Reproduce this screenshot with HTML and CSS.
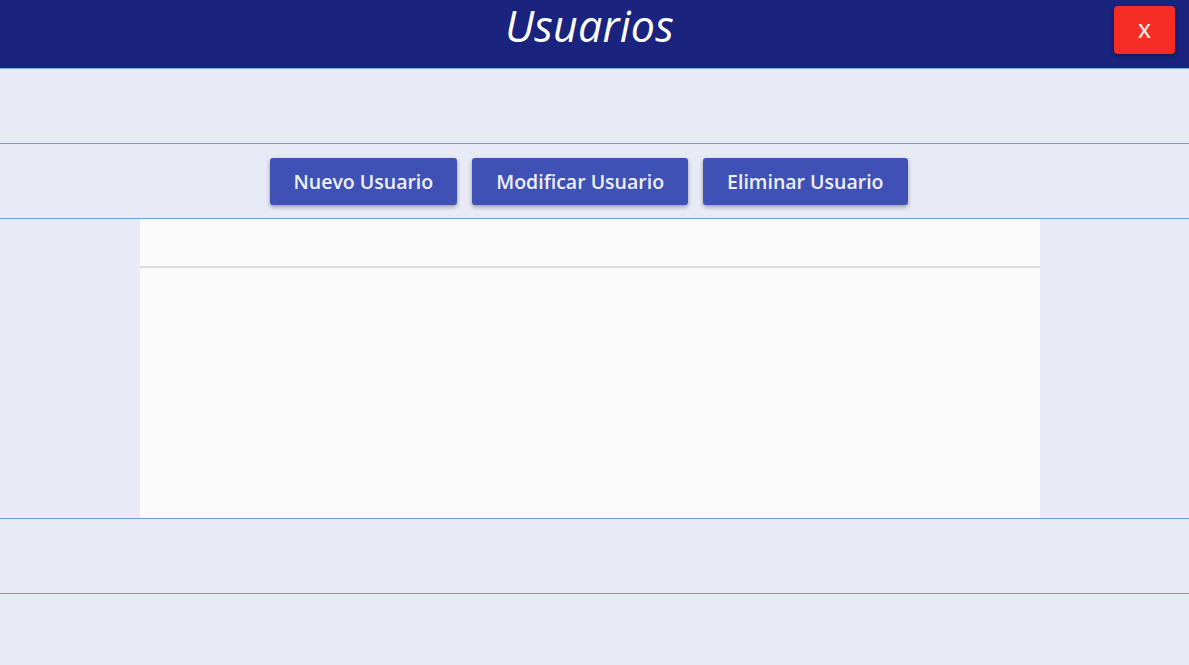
FILE: index.html
```html
<!DOCTYPE html>
<html lang="es">
<head>
<meta charset="utf-8">
<title>Usuarios</title>
<link rel="stylesheet" href="styles.css">
</head>
<body>
<header class="topbar">
  <h1 class="title">Usuarios</h1>
  <button class="close-btn">X</button>
</header>
<section class="band"></section>
<section class="band actions">
  <button class="btn">Nuevo Usuario</button>
  <button class="btn">Modificar Usuario</button>
  <button class="btn">Eliminar Usuario</button>
</section>
<section class="band table-band">
  <div class="table">
    <div class="table-head"></div>
    <div class="table-body"></div>
  </div>
</section>
<section class="band"></section>
<section class="rest"></section>
</body>
</html>
```
FILE: styles.css
```css
* { box-sizing: border-box; }
html, body { margin: 0; padding: 0; }
body {
  background: #e8eaf6;
  font-family: "Open Sans", "Noto Sans", sans-serif;
  height: 665px;
  overflow: hidden;
}
.topbar {
  position: relative;
  height: 69px;
  background: #1a237e;
  border-bottom: 1px solid #82aaf0;
  display: flex;
  align-items: flex-start;
  justify-content: center;
  padding-right: 10px;
  padding-top: 3px;
}
.title {
  margin: 0;
  color: #ffffff;
  font-style: italic;
  font-weight: 400;
  font-size: 43px;
  line-height: 1.05;
  letter-spacing: 0.2px;
}
.close-btn {
  position: absolute;
  top: 6px;
  right: 14px;
  width: 61px;
  height: 48px;
  border: none;
  border-radius: 4px;
  background: #f52d24;
  color: #fbe9e7;
  font-family: "Open Sans", sans-serif;
  font-size: 20px;
  font-weight: 600;
  box-shadow: 0 2px 4px rgba(0,0,0,0.35);
}
.band {
  height: 75px;
  border-bottom: 1px solid #6f9ae8;
}
.actions {
  display: flex;
  justify-content: center;
  align-items: center;
  gap: 15px;
  padding-right: 12px;
}
.btn {
  height: 47px;
  padding: 0 24px;
  border: none;
  border-radius: 3px;
  background: #3f51b5;
  color: #eef0fa;
  font-family: "Open Sans", sans-serif;
  font-size: 19.5px;
  font-weight: 600;
  box-shadow: 0 2px 4px rgba(0,0,0,0.35);
}
.table-band {
  height: 300px;
  display: flex;
  justify-content: flex-start;
  padding-left: 140px;
}
.table {
  width: 900px;
  height: 299px;
  background: #fafafa;
}
.table-head {
  height: 49px;
  border-bottom: 2px solid #dcdcdc;
}
.rest {
  height: 72px;
}
```
